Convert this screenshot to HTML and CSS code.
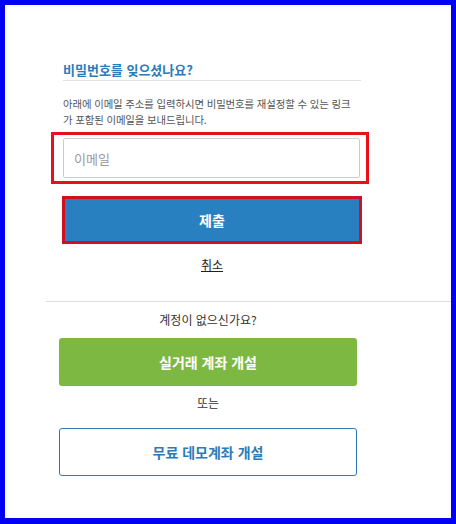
FILE: index.html
```html
<!DOCTYPE html>
<html lang="ko">
<head>
<meta charset="utf-8">
<title>비밀번호를 잊으셨나요?</title>
<link rel="stylesheet" href="styles.css">
</head>
<body>
<div class="frame">
  <section class="top">
    <h2 class="title">비밀번호를 잊으셨나요?</h2>
    <p class="desc">아래에 이메일 주소를 입력하시면 비밀번호를 재설정할 수 있는 링크가 포함된 이메일을 보내드립니다.</p>
    <div class="field hl">
      <input class="email" type="text" placeholder="이메일">
    </div>
    <button class="submit" type="button">제출</button>
    <div class="cancel-row"><a class="cancel" href="#">취소</a></div>
  </section>
  <div class="divider"></div>
  <section class="bottom">
    <p class="note">계정이 없으신가요?</p>
    <button class="btn live" type="button">실거래 계좌 개설</button>
    <p class="or">또는</p>
    <button class="btn demo" type="button">무료 데모계좌 개설</button>
  </section>
</div>
</body>
</html>
```

FILE: styles.css
```css
html, body {
  margin: 0;
  padding: 0;
  background: #ffffff;
}
body {
  font-family: "Noto Sans CJK KR", "Noto Sans", sans-serif;
  color: #333333;
}
.frame {
  width: 456px;
  height: 524px;
  box-sizing: border-box;
  border: 5px solid #0000f5;
  border-bottom-width: 6px;
  background: #fff;
  display: flex;
  flex-direction: column;
}
.top {
  margin-left: 58px;
  width: 298px;
  display: flex;
  flex-direction: column;
}
.title {
  margin: 55px 0 0;
  font-size: 13px;
  line-height: 20px;
  font-weight: 700;
  color: #2b7bba;
  border-bottom: 1px solid #e2e2e2;
}
.desc {
  margin: 15px 0 0;
  width: 292px;
  font-size: 10.4px;
  line-height: 16px;
  color: #555;
  letter-spacing: -0.1px;
  word-break: break-all;
}
.field {
  margin-top: 10px;
  position: relative;
  display: flex;
}
.hl::after {
  content: "";
  position: absolute;
  top: -6px;
  bottom: -6px;
  left: -12px;
  right: -8px;
  border: 3px solid #e8101c;
  pointer-events: none;
}
.email {
  width: 297px;
  height: 40px;
  box-sizing: border-box;
  border: 1px solid #cccccc;
  border-radius: 2px;
  padding: 0 10px;
  font-family: inherit;
  font-size: 13px;
  color: #333;
  outline: none;
}
.email::placeholder {
  color: #999;
}
.submit {
  margin: 18px 0 0 -1px;
  width: 300px;
  height: 48px;
  border: 0;
  background: #2980c0;
  box-shadow: inset 0 0 0 3px #d0101e;
  color: #fff;
  font-family: inherit;
  font-size: 14px;
  font-weight: 700;
}
.cancel-row {
  margin-top: 13px;
  text-align: center;
  font-size: 12px;
  line-height: 16px;
}
.cancel {
  font-size: 12px;
  color: #222;
  text-decoration: underline;
}
.divider {
  margin: 28px 0 0 41px;
  border-top: 1px solid #dddddd;
}
.bottom {
  margin-left: 54px;
  width: 298px;
  display: flex;
  flex-direction: column;
}
.note, .or {
  margin: 10px 0 0;
  text-align: center;
  font-size: 12px;
  line-height: 16px;
  color: #333;
}
.or {
  margin-top: 9px;
}
.btn {
  height: 48px;
  border-radius: 3px;
  font-family: inherit;
  font-size: 14px;
  font-weight: 700;
}
.live {
  margin-top: 10px;
  border: 0;
  background: #7db843;
  color: #fff;
}
.demo {
  margin-top: 17px;
  border: 1px solid #2b7bba;
  background: #fff;
  color: #2b7bba;
}
```
